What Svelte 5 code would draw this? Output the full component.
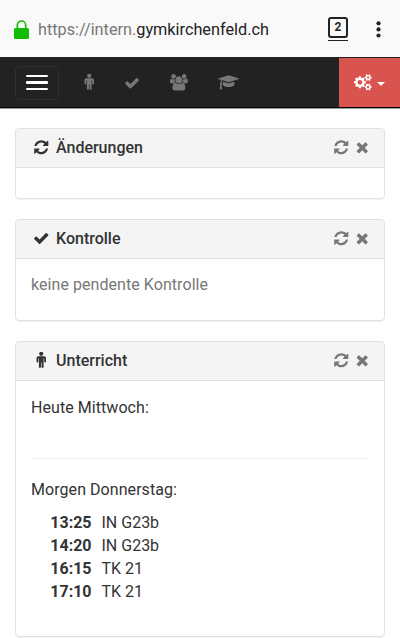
<script>
  const icons = {
    check: [1792, 'M1671 566q0 40-28 68l-724 724-136 136q-28 28-68 28t-68-28l-136-136-362-362q-28-28-28-68t28-68l136-136q28-28 68-28t68 28l294 295 656-657q28-28 68-28t68 28l136 136q28 28 28 68z'],
    refresh: [1792, 'M1639 1056q0 5-1 7-64 268-268 434.5t-478 166.5q-146 0-282.500-55t-243.500-157l-129 129q-19 19-45 19t-45-19-19-45v-448q0-26 19-45t45-19h448q26 0 45 19t19 45-19 45l-137 137q71 66 161 102t187 36q134 0 250-65t186-179q11-17 53-117 8-23 30-23h192q13 0 22.500 9.500t9.500 22.500zm25-800v448q0 26-19 45t-45 19h-448q-26 0-45-19t-19-45 19-45l138-138q-148-137-349-137-134 0-250 65t-186 179q-11 17-53 117-8 23-30 23h-199q-13 0-22.500-9.500t-9.500-22.500v-7q65-268 270-434.500t480-166.500q146 0 284 55.500t245 156.500l130-129q19-19 45-19t45 19 19 45z'],
    times: [1792, 'M1490 1322q0 40-28 68l-136 136q-28 28-68 28t-68-28l-294-294-294 294q-28 28-68 28t-68-28l-136-136q-28-28-28-68t28-68l294-294-294-294q-28-28-28-68t28-68l136-136q28-28 68-28t68 28l294 294 294-294q28-28 68-28t68 28l136 136q28 28 28 68t-28 68l-294 294 294 294q28 28 28 68z'],
    cap: [2304, 'M1774 836l18 316q4 69-82 128t-235 93.500-323 34.500-323-34.500-235-93.500-82-128l18-316 574 181q22 7 48 7t48-7zm530-324q0 23-22 31l-1120 352q-4 1-10 1t-10-1l-652-206q-43 34-71 111.500t-34 178.500q63 36 63 109 0 69-58 107l58 433q2 14-8 25-9 11-24 11h-192q-15 0-24-11-10-11-8-25l58-433q-58-38-58-107 0-73 65-111 11-207 98-330l-333-104q-22-8-22-31t22-31l1120-352q4-1 10-1t10 1l1120 352q22 8 22 31z'],
    male: [1792, 'M1408 640v416q0 40-28 68t-68 28-68-28-28-68v-352h-64v912q0 46-33 79t-79 33-79-33-33-79v-464h-64v464q0 46-33 79t-79 33-79-33-33-79v-912h-64v352q0 40-28 68t-68 28-68-28-28-68v-416q0-80 56-136t136-56h640q80 0 136 56t56 136zm-288-448q0 93-65.500 158.500t-158.500 65.500-158.500-65.500-65.500-158.500 65.500-158.500 158.500-65.500 158.500 65.500 65.500 158.500z'],
    users: [1920, 'M593 896q-162 5-265 128h-134q-82 0-138-40.500t-56-118.500q0-353 124-353 6 0 43.500 21t97.500 42.500 119 21.500q67 0 133-23-5 37-5 66 0 159 93 293zm1071 637q0 120-73 189.500t-194 69.500h-874q-121 0-194-69.500t-73-189.500q0-53 3.500-103.500t14-109 26.500-108.500 43-97.500 62-81 85.500-53.500 111.500-20q10 0 43 21.500t73 48 107 48 135 21.500 135-21.500 107-48 73-48 43-21.500q61 0 111.500 20t85.500 53.500 62 81 43 97.500 26.500 108.500 14 109 3.500 103.500zm-1024-1277q0 106-75 181t-181 75-181-75-75-181 75-181 181-75 181 75 75 181zm704 384q0 159-112.500 271.500t-271.500 112.500-271.500-112.500-112.500-271.500 112.500-271.500 271.500-112.500 271.500 112.500 112.500 271.500zm576 225q0 78-56 118.500t-138 40.500h-134q-103-123-265-128 93-134 93-293 0-29-5-66 66 23 133 23 59 0 119-21.500t97.500-42.500 43.500-21q124 0 124 353zm-128-609q0 106-75 181t-181 75-181-75-75-181 75-181 181-75 181 75 75 181z'],
    cogs: [1920, 'M896 896q0-106-75-181t-181-75-181 75-75 181 75 181 181 75 181-75 75-181zm768 512q0-52-38-90t-90-38-90 38-38 90q0 53 37.500 90.500t90.500 37.500 90.500-37.500 37.500-90.500zm0-1024q0-52-38-90t-90-38-90 38-38 90q0 53 37.500 90.500t90.500 37.500 90.500-37.500 37.500-90.500zm-384 421v185q0 10-7 19.500t-16 10.500l-155 24q-11 35-32 76 34 48 90 115 7 11 7 20 0 12-7 19-23 30-82.500 89.500t-78.500 59.500q-11 0-21-7l-115-90q-37 19-77 31-11 108-23 155-7 24-30 24h-186q-11 0-20-7.500t-10-17.500l-23-153q-34-10-75-31l-118 89q-7 7-20 7-11 0-21-8-144-133-144-160 0-9 7-19 10-14 41-53t47-61q-23-44-35-82l-152-24q-10-1-17-9.500t-7-19.500v-185q0-10 7-19.500t16-10.500l155-24q11-35 32-76-34-48-90-115-7-11-7-20 0-12 7-20 22-30 82-89t79-59q11 0 21 7l115 90q34-18 77-32 11-108 23-154 7-24 30-24h186q11 0 20 7.500t10 17.500l23 153q34 10 75 31l118-89q8-7 20-7 11 0 21 8 144 133 144 160 0 9-7 19-12 16-42 54t-45 60q23 48 34 82l152 23q10 2 17 10.500t7 19.500zm640 533v140q0 16-149 31-12 27-30 52 51 113 51 138 0 4-4 7-122 71-124 71-8 0-46-47t-52-68q-20 2-30 2t-30-2q-14 21-52 68t-46 47q-2 0-124-71-4-3-4-7 0-25 51-138-18-25-30-52-149-15-149-31v-140q0-16 149-31 13-29 30-52-51-113-51-138 0-4 4-7 4-2 35-20t59-34 30-16q8 0 46 46.500t52 67.500q20-2 30-2t30 2q51-71 92-112l6-2q4 0 124 70 4 3 4 7 0 25-51 138 17 23 30 52 149 15 149 31zm0-1024v140q0 16-149 31-12 27-30 52 51 113 51 138 0 4-4 7-122 71-124 71-8 0-46-47t-52-68q-20 2-30 2t-30-2q-14 21-52 68t-46 47q-2 0-124-71-4-3-4-7 0-25 51-138-18-25-30-52-149-15-149-31v-140q0-16 149-31 13-29 30-52-51-113-51-138 0-4 4-7 4-2 35-20t59-34 30-16q8 0 46 46.500t52 67.500q20-2 30-2t30 2q51-71 92-112l6-2q4 0 124 70 4 3 4 7 0 25-51 138 17 23 30 52 149 15 149 31z']
  };
  const lessons = [
    ['13:25', 'IN G23b'],
    ['14:20', 'IN G23b'],
    ['16:15', 'TK 21'],
    ['17:10', 'TK 21']
  ];
</script>

{#snippet icon(name, size = 16)}
  <svg class="icon" width={(size * icons[name][0]) / 1792} height={size} viewBox="0 0 {icons[name][0]} 1792"><path d={icons[name][1]} /></svg>
{/snippet}

{#snippet heading(name, title)}
  <header class="heading">
    <span class="lead">{@render icon(name, 16.5)}</span>
    <h2>{title}</h2>
    <span class="tools">{@render icon('refresh', 16.5)}{@render icon('times', 16.5)}</span>
  </header>
{/snippet}

<div class="page">
  <div class="browser">
    <svg class="lock" width="15" height="19" viewBox="0 0 15 19">
      <path d="M3.300 9V5.200a4.200 4.200 0 0 1 8.400 0V9" fill="none" stroke="#12bc00" stroke-width="1.700" />
      <rect y="8" width="15" height="11" rx="1.500" fill="#12bc00" />
    </svg>
    <div class="url">https://intern.<span>gymkirchenfeld.ch</span></div>
    <div class="tabs"><b>2</b></div>
    <svg class="dots" width="5" height="17" viewBox="0 0 5 17"><circle cx="2.500" cy="2.300" r="2.100" /><circle cx="2.500" cy="8.400" r="2.100" /><circle cx="2.500" cy="14.500" r="2.100" /></svg>
  </div>

  <nav>
    <div class="burger"><i></i><i></i><i></i></div>
    <div class="links">
      <span class="n1">{@render icon('male', 16.5)}</span>
      <span class="n2">{@render icon('check', 16)}</span>
      <span class="n3">{@render icon('users', 16.5)}</span>
      <span class="n4">{@render icon('cap', 16.5)}</span>
    </div>
    <div class="settings">{@render icon('cogs', 16.5)}<i class="caret"></i></div>
  </nav>

  <main>
    <section>
      {@render heading('refresh', 'Änderungen')}
      <div class="empty"></div>
    </section>
    <section>
      {@render heading('check', 'Kontrolle')}
      <div class="pending">keine pendente Kontrolle</div>
    </section>
    <section>
      {@render heading('male', 'Unterricht')}
      <div class="schedule">
        <p>Heute Mittwoch:</p>
        <hr />
        <p>Morgen Donnerstag:</p>
        <dl>
          {#each lessons as [time, room]}
            <dt>{time}</dt>
            <dd>{room}</dd>
          {/each}
        </dl>
      </div>
    </section>
  </main>
</div>

<style>
  :global(body) { background: #fff; overflow: hidden; }
  .page { height: 638px; overflow: hidden; box-sizing: border-box; font: 16px/23px Roboto, sans-serif; color: #333; }
  .icon { display: block; fill: currentColor; }
  .browser { height: 57px; box-sizing: border-box; background: #f9f9fa; display: flex; align-items: center; padding: 2px 19px 0 14px; }
  .lock { margin-top: -1px; }
  .url { margin-left: 9px; flex: 1; font-size: 16.250px; color: #777; white-space: nowrap; }
  .url span { color: #222; }
  .tabs { width: 20px; height: 24px; box-sizing: border-box; border-bottom: 1px solid #222; margin: -2px 28px 0 0; }
  .tabs b { display: block; box-sizing: border-box; width: 20px; height: 21px; border: 2px solid #222; border-radius: 3px; font-size: 12px; line-height: 17px; text-align: center; color: #222; }
  .dots { fill: #222; }
  nav { height: 51px; display: flex; background: #222; border-top: 1px solid #222; border-bottom: 1px solid #080808; box-shadow: 0 1px 0 #999; box-sizing: border-box; align-items: center; }
  .burger { box-sizing: border-box; margin-left: 15px; width: 44px; height: 34px; border: 1px solid #2e2e2e; border-radius: 4px; display: flex; flex-direction: column; justify-content: center; align-items: center; gap: 4.300px; }
  .burger i { display: block; width: 22px; height: 2.200px; background: #fff; border-radius: 1px; }
  .links { display: flex; flex: 1; color: #777; align-items: center; }
  .n1 { margin-left: 21.500px; }
  .n2 { margin-left: 26.500px; }
  .n3 { margin-left: 30.500px; }
  .n4 { margin-left: 30px; }
  .settings { width: 61px; box-sizing: border-box; padding-left: 15px; height: 49px; background: #d9534f; color: #fff; display: flex; align-items: center; gap: 5px; }
  .caret { border: 4px solid transparent; border-top-color: #fff; border-bottom: 0; margin-top: 3px; }
  main { padding: 20px 15px 0; }
  section { border: 1px solid #e0e0e0; border-radius: 4px; box-shadow: 0 1px 1px rgba(0, 0, 0, 0.05); margin-bottom: 20px; }
  .heading { height: 39px; box-sizing: border-box; padding: 0 13.500px 2px 17px; background: #f4f4f4; border-bottom: 1px solid #e0e0e0; border-radius: 3px 3px 0 0; display: flex; align-items: center; }
  h2 { margin: 0 0 0 6.500px; font-size: 16px; font-weight: 500; line-height: 23px; flex: 1; }
  .tools { display: flex; gap: 5px; color: #777; }
  .empty { height: 30px; }
  .pending { height: 61px; box-sizing: border-box; padding: 14px 15px; color: #777; letter-spacing: 0.060px; }
  .schedule { padding: 15px 15px 33px; }
  p { margin: 0; letter-spacing: 0.060px; }
  hr { margin: 39px 0 19px; border: 0; border-top: 1px solid #eee; }
  dl { margin: 10px 0 0; display: grid; grid-template-columns: 60.500px 1fr; column-gap: 10px; }
  dt { text-align: right; font-weight: 700; }
  dd { margin: 0; }
</style>
